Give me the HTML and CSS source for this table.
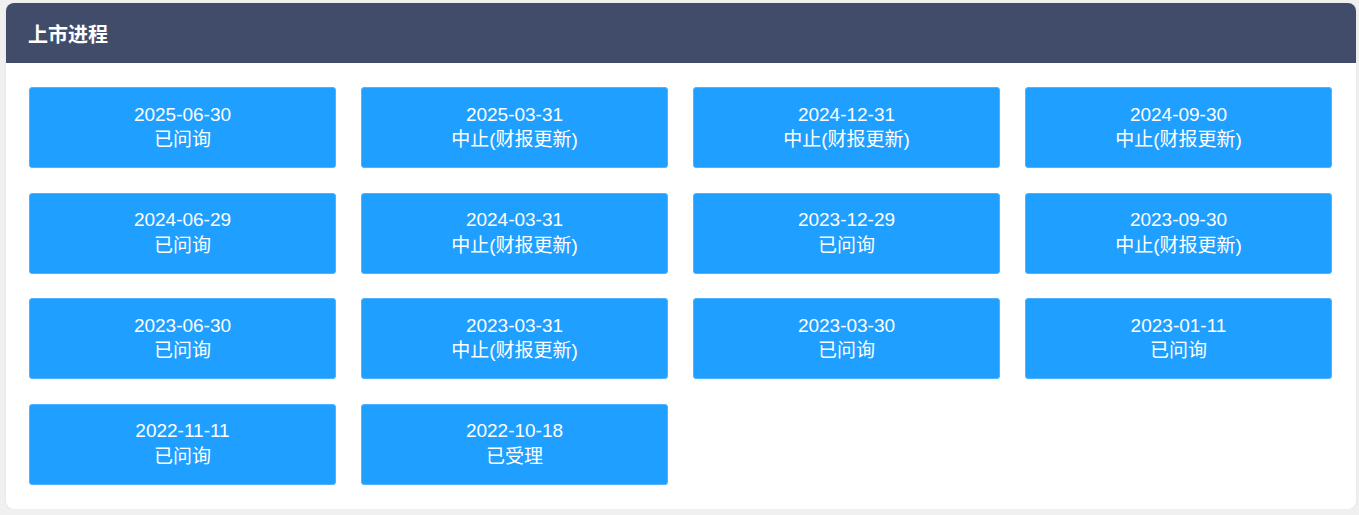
FILE: index.html
```html
<!DOCTYPE html>
<html lang="zh">
<head>
<meta charset="utf-8">
<title>上市进程</title>
<link rel="stylesheet" href="styles.css">
</head>
<body>
<div class="card">
  <div class="card-head">上市进程</div>
  <div class="card-body">
    <div class="grid">
      <div class="item"><div class="date">2025-06-30</div><div class="status">已问询</div></div>
      <div class="item"><div class="date">2025-03-31</div><div class="status">中止(财报更新)</div></div>
      <div class="item"><div class="date">2024-12-31</div><div class="status">中止(财报更新)</div></div>
      <div class="item"><div class="date">2024-09-30</div><div class="status">中止(财报更新)</div></div>
      <div class="item"><div class="date">2024-06-29</div><div class="status">已问询</div></div>
      <div class="item"><div class="date">2024-03-31</div><div class="status">中止(财报更新)</div></div>
      <div class="item"><div class="date">2023-12-29</div><div class="status">已问询</div></div>
      <div class="item"><div class="date">2023-09-30</div><div class="status">中止(财报更新)</div></div>
      <div class="item"><div class="date">2023-06-30</div><div class="status">已问询</div></div>
      <div class="item"><div class="date">2023-03-31</div><div class="status">中止(财报更新)</div></div>
      <div class="item"><div class="date">2023-03-30</div><div class="status">已问询</div></div>
      <div class="item"><div class="date">2023-01-11</div><div class="status">已问询</div></div>
      <div class="item"><div class="date">2022-11-11</div><div class="status">已问询</div></div>
      <div class="item"><div class="date">2022-10-18</div><div class="status">已受理</div></div>
    </div>
  </div>
</div>
</body>
</html>
```
FILE: styles.css
```css
html, body {
  margin: 0;
  padding: 0;
}
body {
  background: #f0f0f0;
  font-family: "Liberation Sans", Arial, "Noto Sans CJK SC", sans-serif;
  padding: 3px 3px 0 6px;
}
.card {
  width: 1350px;
  background: #ffffff;
  border-radius: 8px;
  overflow: hidden;
  box-shadow: 0 1px 3px rgba(0, 0, 0, 0.06);
}
.card-head {
  height: 60px;
  box-sizing: border-box;
  padding: 2px 0 0 22px;
  background: #414c6a;
  color: #ffffff;
  font-family: "Noto Sans CJK SC", sans-serif;
  font-weight: 700;
  font-size: 20px;
  line-height: 58px;
}
.card-body {
  padding: 24px 24px 24px 23px;
}
.grid {
  display: grid;
  grid-template-columns: repeat(4, 307px);
  column-gap: 25px;
  row-gap: 24.5px;
}
.item {
  height: 81px;
  box-sizing: border-box;
  padding-bottom: 1px;
  background: #1f9fff;
  border: 1px solid #4db2ff;
  border-radius: 3px;
  color: #ffffff;
  text-align: center;
  display: flex;
  flex-direction: column;
  justify-content: center;
  font-size: 19px;
  line-height: 25.5px;
}
.status {
  font-family: "Liberation Sans", Arial, "Noto Sans CJK SC", sans-serif;
}
```
